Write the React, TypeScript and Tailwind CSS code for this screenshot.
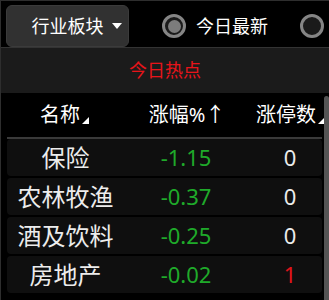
import React from 'react';

interface Row {
  name: string;
  pct: string;
  limit: string;
  up?: boolean;
}

const rows: Row[] = [
  { name: '保险', pct: '-1.15', limit: '0' },
  { name: '农林牧渔', pct: '-0.37', limit: '0' },
  { name: '酒及饮料', pct: '-0.25', limit: '0' },
  { name: '房地产', pct: '-0.02', limit: '1', up: true },
];

const Radio: React.FC<{ checked?: boolean }> = ({ checked }) => (
  <span className="w-[24px] h-[24px] rounded-full border-[3px] border-[#858585] bg-[#1a1a1a] flex items-center justify-center shrink-0">
    {checked && <span className="w-[13px] h-[13px] rounded-full bg-[#7c7c7c]" />}
  </span>
);

const SortMark = () => (
  <svg width="7" height="7" viewBox="0 0 8 8" className="ml-[2px] mb-[6px]">
    <path d="M8 0 L8 8 L0 8 Z" fill="#ffffff" />
  </svg>
);

export default function App() {
  return (
    <div
      className="w-[329px] h-[300px] bg-black border-t border-l border-[#2e2e2e] overflow-hidden relative text-[#ececec]"
      style={{ fontFamily: '"Noto Sans", "Noto Sans CJK SC", sans-serif' }}
    >
      {/* top controls */}
      <div className="h-[46px] flex items-center pl-[5px] pt-[4px]">
        <button className="w-[123px] h-[42px] rounded-[6px] bg-[#313131] border border-[#3b3b3b] flex items-center justify-center gap-[8px] pl-[18px] text-[18px] text-white">
          <span>行业板块</span>
          <svg width="10" height="6" viewBox="0 0 10 6">
            <path d="M0 0 H10 L5 6 Z" fill="#ffffff" />
          </svg>
        </button>
        <div className="ml-[33px] flex items-center gap-[10px]">
          <Radio checked />
          <span className="text-[18px] text-white">今日最新</span>
        </div>
        <div className="ml-[32px]">
          <Radio />
        </div>
      </div>

      {/* hot bar */}
      <div className="h-[46px] bg-[#1b1b1b] border-t border-[#333] flex items-center justify-center text-[18px] text-[#e8141a]">
        今日热点
      </div>

      {/* table header */}
      <div className="h-[44px] flex items-center text-[20px] text-white">
        <div className="w-[123px] flex items-end justify-center pl-[4px]">
          <span>名称</span>
          <SortMark />
        </div>
        <div className="w-[126px] text-center">涨幅%↑</div>
        <div className="flex-1 flex items-end pl-[6px]">
          <span>涨停数</span>
          <SortMark />
        </div>
      </div>

      {/* rows */}
      <div className="ml-[6px] mr-[7px] border-t-2 border-[#3a3a3a] flex flex-col gap-[2px]">
        {rows.map((r) => (
          <div key={r.name} className="h-[37px] rounded-[4px] bg-[#0f0f0f] flex items-center text-[22px]">
            <div className="w-[117px] text-center text-[24px]">{r.name}</div>
            <div className="w-[124px] text-center text-[#1faa2a]">{r.pct}</div>
            <div className={`flex-1 text-center pl-[10px] ${r.up ? 'text-[#e0141a]' : 'text-[#ececec]'}`}>{r.limit}</div>
          </div>
        ))}
      </div>

      {/* scrollbar */}
      <div className="absolute right-0 top-[95px] bottom-0 w-[5px] rounded-t-[3px] bg-[#545454]" />
    </div>
  );
}
